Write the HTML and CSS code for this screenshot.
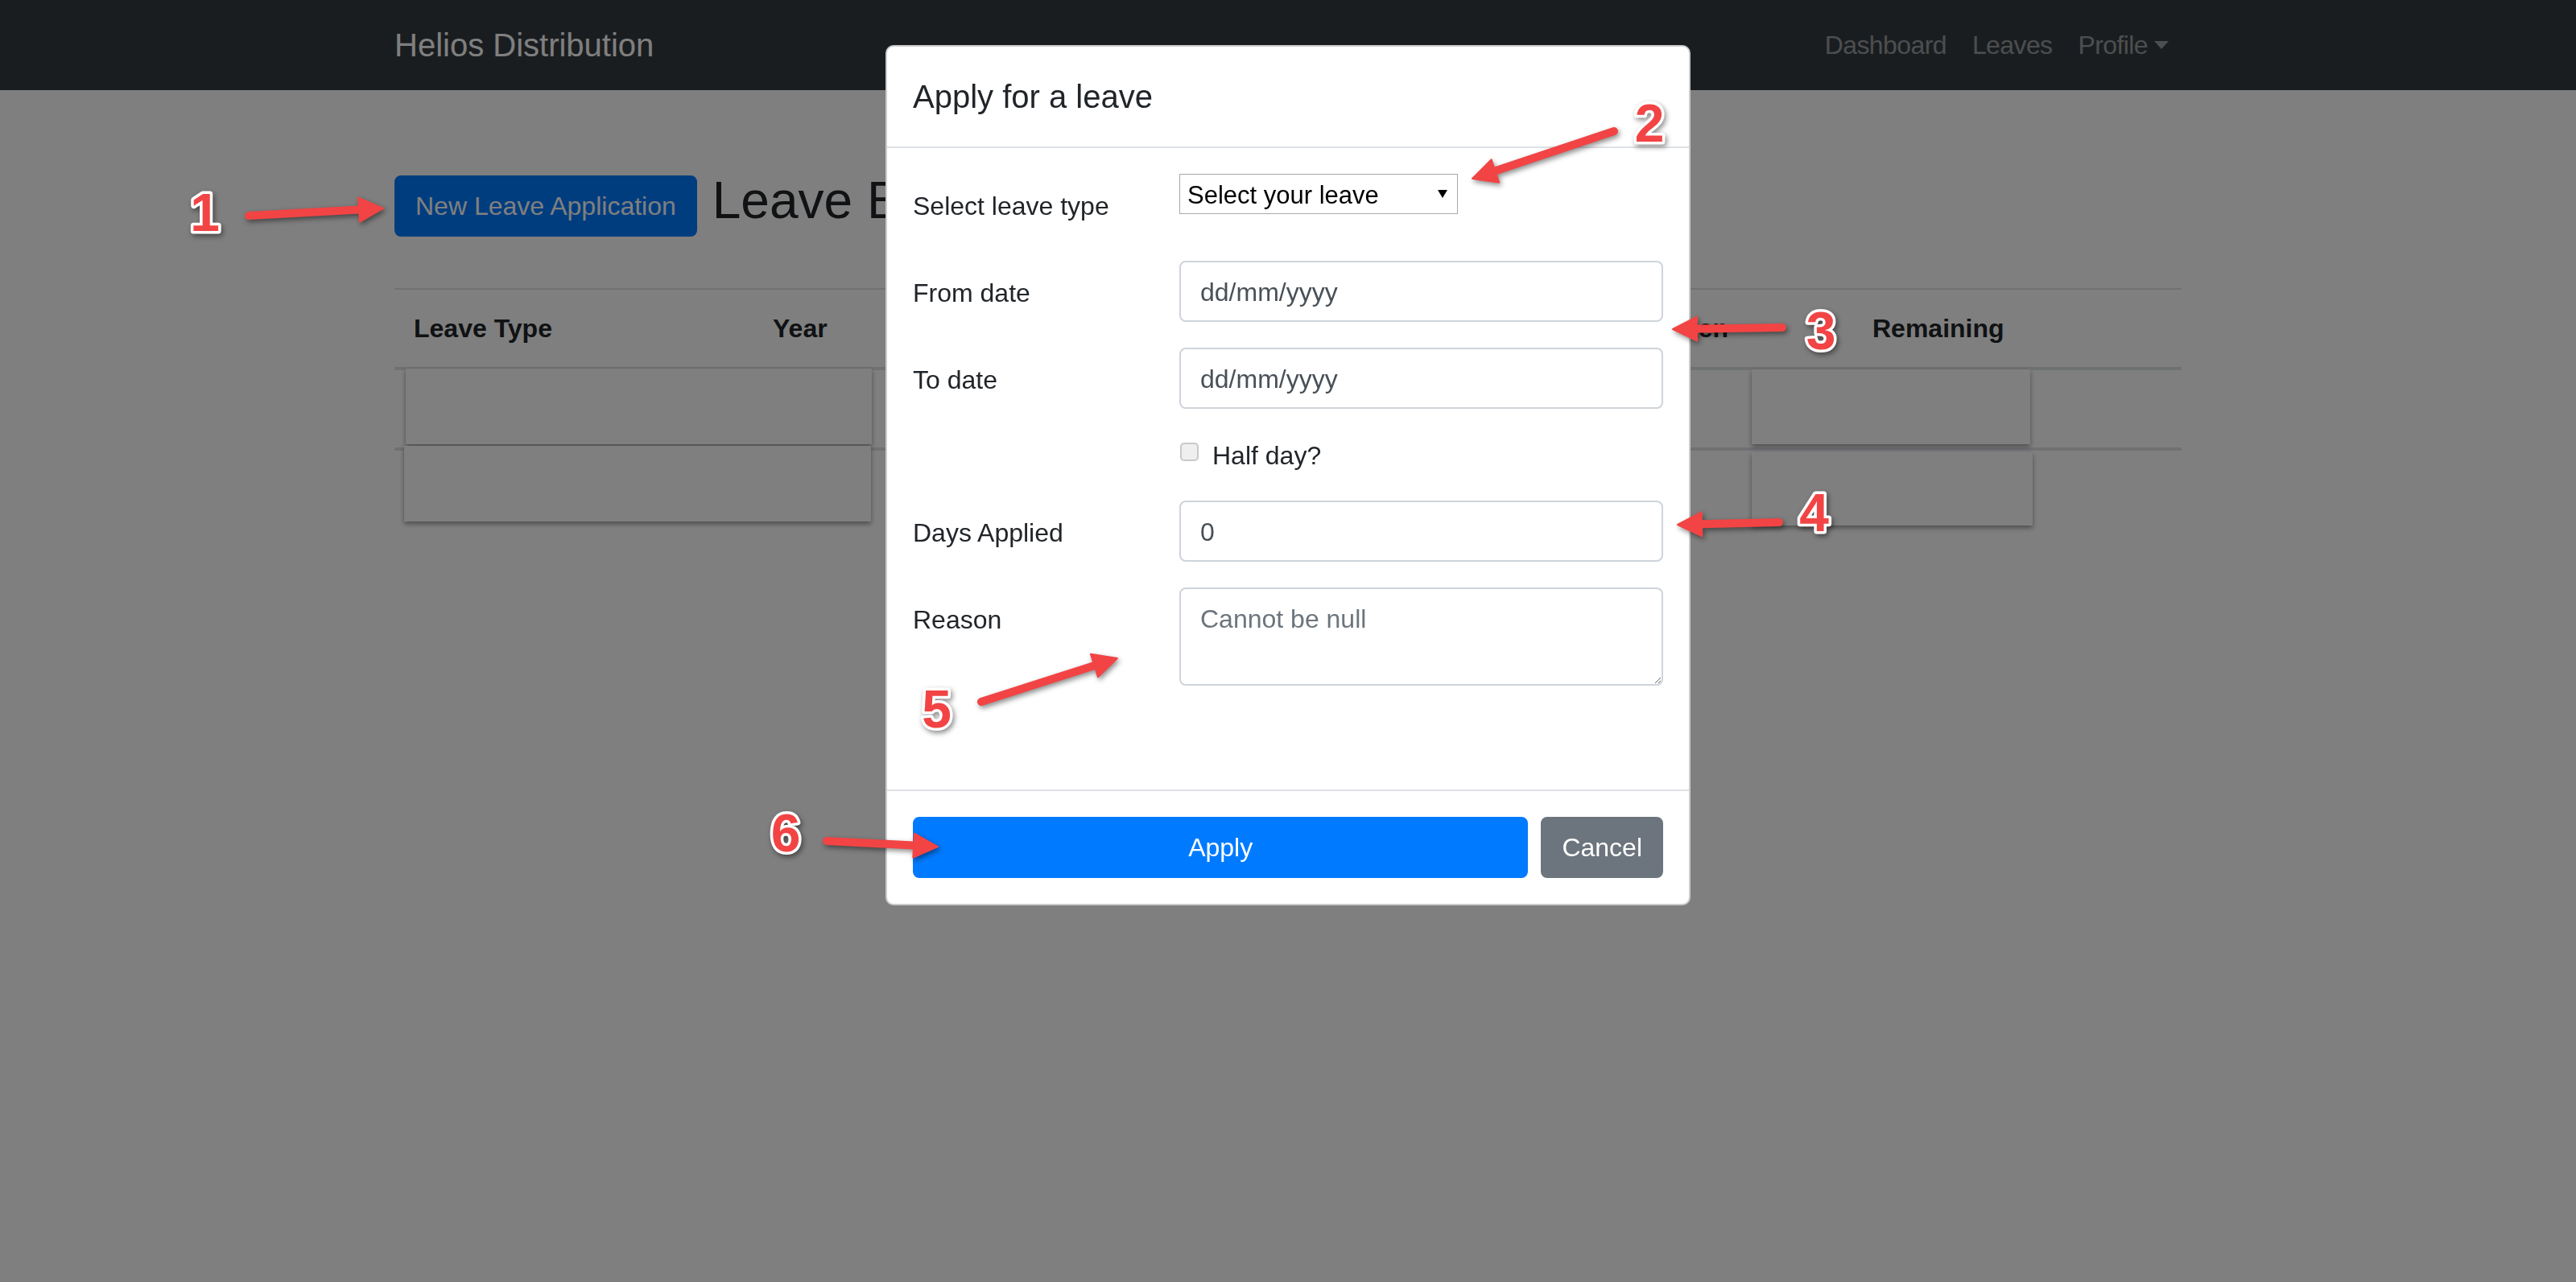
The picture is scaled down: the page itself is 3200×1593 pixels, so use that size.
FILE: index.html
```html
<!DOCTYPE html>
<html lang="en">
<head>
<meta charset="utf-8">
<title>Leaves - Helios Distribution</title>
<link rel="stylesheet" href="styles.css">
</head>
<body>
<nav class="navbar">
  <div class="nav-inner">
    <a class="brand" href="#">Helios Distribution</a>
    <ul class="nav-links">
      <li><a href="#">Dashboard</a></li>
      <li><a href="#">Leaves</a></li>
      <li><a href="#" class="dropdown-toggle">Profile</a></li>
    </ul>
  </div>
</nav>

<main class="page">
  <div class="title-row">
    <button class="btn btn-primary" type="button">New Leave Application</button>
    <h2 class="page-title">Leave Balance</h2>
  </div>

  <div class="table">
    <div class="thead">
      <div class="th c1">Leave Type</div>
      <div class="th c2">Year</div>
      <div class="th c3">Entitled</div>
      <div class="th c4">Carried Forward</div>
      <div class="th c5">Taken</div>
      <div class="th c6">Remaining</div>
    </div>
    <div class="tr tr-1">
      <div class="skel skel-a"></div>
      <div class="skel skel-b"></div>
    </div>
    <div class="tr tr-2">
      <div class="skel skel-c"></div>
      <div class="skel skel-d"></div>
    </div>
  </div>
</main>

<div class="backdrop"></div>

<div class="modal">
  <div class="modal-dialog">
    <div class="modal-content">
      <div class="modal-header">
        <h5 class="modal-title">Apply for a leave</h5>
      </div>
      <form class="modal-body">
        <div class="form-row">
          <label class="col-label">Select leave type</label>
          <div class="col-field">
            <span class="select-wrap">
              <select class="plain-select"><option>Select your leave</option></select>
            </span>
          </div>
        </div>
        <div class="form-row">
          <label class="col-label">From date</label>
          <div class="col-field"><input class="form-control ph-dark" type="text" placeholder="dd/mm/yyyy"></div>
        </div>
        <div class="form-row">
          <label class="col-label">To date</label>
          <div class="col-field"><input class="form-control ph-dark" type="text" placeholder="dd/mm/yyyy"></div>
        </div>
        <div class="form-row">
          <div class="col-field col-offset">
            <label class="form-check"><input class="check" type="checkbox"><span>Half day?</span></label>
          </div>
        </div>
        <div class="form-row">
          <label class="col-label">Days Applied</label>
          <div class="col-field"><input class="form-control" type="text" value="0"></div>
        </div>
        <div class="form-row">
          <label class="col-label">Reason</label>
          <div class="col-field"><textarea class="form-control textarea" rows="2" placeholder="Cannot be null"></textarea></div>
        </div>
      </form>
      <div class="modal-footer">
        <button class="btn btn-primary btn-apply" type="button">Apply</button>
        <button class="btn btn-secondary" type="button">Cancel</button>
      </div>
    </div>
  </div>
</div>

<svg class="annotations" width="3200" height="1593" viewBox="0 0 3200 1593" aria-hidden="true">
  <g class="arrows">
    <line x1="309" y1="268" x2="456" y2="260"/>
    <polygon points="476,259 446.9,275.6 445.2,245.6"/>
    <line x1="2005" y1="163" x2="1848" y2="215.6"/>
    <polygon points="1829,222 1852.7,198.2 1862.2,226.7"/>
    <line x1="2214" y1="407" x2="2098" y2="408.7"/>
    <polygon points="2078,409 2107.8,393.6 2108.2,423.6"/>
    <line x1="2210" y1="649" x2="2104" y2="651.5"/>
    <polygon points="2084,652 2113.6,636.3 2114.4,666.3"/>
    <line x1="1219" y1="872" x2="1369" y2="824.1"/>
    <polygon points="1388,818 1364,841.4 1354.9,812.8"/>
    <line x1="1027" y1="1045" x2="1145" y2="1051"/>
    <polygon points="1165,1052 1134.3,1065.5 1135.8,1035.5"/>
  </g>
  <g class="nums">
    <text x="254.5" y="287">1</text>
    <text x="2049" y="175.6">2</text>
    <text x="2262" y="434">3</text>
    <text x="2253.5" y="659.6">4</text>
    <text x="1163.5" y="903.6">5</text>
    <text x="976" y="1058">6</text>
  </g>
</svg>
</body>
</html>
```

FILE: styles.css
```css
* { box-sizing: border-box; }

html, body {
  margin: 0;
  width: 3200px;
  height: 1593px;
  overflow: hidden;
}

body {
  position: relative;
  background: #fff;
  color: #212529;
  font-family: "Liberation Sans", Arial, sans-serif;
  font-size: 32px;
  line-height: 1.5;
}

a { text-decoration: none; }

/* Navbar */
.navbar {
  background: #343a40;
  padding: 16px 0;
}
.nav-inner {
  width: 2220px;
  margin: 0 auto;
  display: flex;
  align-items: center;
  justify-content: space-between;
}
.brand {
  color: #fff;
  font-size: 40px;
  line-height: 60px;
  padding: 10px 0;
}
.nav-links {
  list-style: none;
  margin: 0;
  padding: 0;
  display: flex;
}
.nav-links a {
  display: block;
  padding: 16px;
  line-height: 48px;
  letter-spacing: -0.6px;
  color: rgba(255, 255, 255, .5);
}
.dropdown-toggle::after {
  content: "";
  display: inline-block;
  margin-left: 8px;
  vertical-align: 6px;
  border-top: 10px solid;
  border-left: 9.5px solid transparent;
  border-right: 9.5px solid transparent;
}

/* Page */
.page {
  width: 2220px;
  margin: 106px auto 0;
}
.title-row {
  display: flex;
  align-items: flex-start;
  margin-bottom: 64px;
}
.page-title {
  margin: -7px 0 0 19px;
  font-size: 64px;
  font-weight: 500;
  line-height: 1.2;
}

.btn {
  display: inline-block;
  font-family: inherit;
  font-size: 32px;
  line-height: 48px;
  padding: 12px 24px;
  border: 2px solid transparent;
  border-radius: 8px;
  color: #fff;
  cursor: pointer;
  text-align: center;
}
.btn-primary { background: #007bff; border-color: #007bff; }
.btn-secondary { background: #6c757d; border-color: #6c757d; }

/* Table */
.table { border-top: 2px solid #dee2e6; }
.thead {
  display: grid;
  grid-template-columns: 446px 364px 400px 333px 269px 408px;
  border-bottom: 4px solid #dee2e6;
}
.th {
  padding: 24px;
  font-weight: bold;
  line-height: 48px;
}
.tr {
  display: grid;
  height: 96px;
  border-top: 4px solid #dee2e6;
}
.tr-1 { grid-template-columns: 14px 579px 1093px 346px 1fr; border-top: 0; height: 96px; }
.tr-2 { grid-template-columns: 12px 580px 1094px 349px 1fr; }
.skel {
  background: #fff;
  box-shadow: 0 3px 6px rgba(0, 0, 0, .4);
  align-self: start;
}
.skel-a { grid-column: 2; margin-top: -2px; height: 94px; }
.skel-b { grid-column: 4; margin-top: -1px; height: 93px; }
.skel-c { grid-column: 2; margin-top: -6px; height: 94px; }
.skel-d { grid-column: 4; margin-top: 2px; height: 91px; }

/* Modal */
.backdrop {
  position: fixed;
  inset: 0;
  background: rgba(0, 0, 0, .5);
  z-index: 1040;
}
.modal {
  position: fixed;
  inset: 0;
  z-index: 1050;
}
.modal-dialog {
  width: 1000px;
  margin: 56px auto 0;
}
.modal-content {
  background: #fff;
  border: 2px solid rgba(0, 0, 0, .2);
  border-radius: 10px;
}
.modal-header {
  padding: 32px;
  border-bottom: 2px solid #dee2e6;
}
.modal-title {
  margin: 0;
  font-size: 40px;
  font-weight: 500;
  line-height: 60px;
}
.modal-body {
  display: block;
  margin: 0;
  padding: 32px 32px 129px;
}
.form-row {
  display: grid;
  grid-template-columns: 331px 601px;
  margin-bottom: 32px;
}
.form-row:last-child { margin-bottom: 0; }
.col-label {
  padding: 16px 0 12px;
  line-height: 48px;
}
.col-offset { grid-column: 2; }

.select-wrap {
  position: relative;
  display: inline-block;
}
.select-wrap::after {
  content: "";
  position: absolute;
  right: 13px;
  top: 20px;
  border-top: 10px solid #000;
  border-left: 6px solid transparent;
  border-right: 6px solid transparent;
  pointer-events: none;
}
.plain-select {
  -webkit-appearance: none;
  appearance: none;
  display: block;
  width: 346px;
  height: 50px;
  margin: 0;
  padding: 2px 30px 0 9px;
  border: 1px solid #a9a9a9;
  border-radius: 0;
  background: #fff;
  color: #000;
  font-family: inherit;
  font-size: 31px;
}

.form-control {
  display: block;
  width: 100%;
  height: 76px;
  margin: 0;
  padding: 13px 24px 11px;
  font-family: inherit;
  font-size: 32px;
  line-height: 48px;
  color: #495057;
  background: #fff;
  border: 2px solid #ced4da;
  border-radius: 8px;
}
.form-control::placeholder { color: #6c757d; opacity: 1; }
.ph-dark::placeholder { color: #495057; }
.textarea {
  height: 122px;
  resize: vertical;
}

.form-check {
  display: flex;
  align-items: flex-start;
  line-height: 48px;
  padding-top: 2px;
}
.check {
  -webkit-appearance: none;
  appearance: none;
  width: 23px;
  height: 23px;
  margin: 8px 17px 0 1px;
  border: 2px solid #c9c9c9;
  border-radius: 5px;
  background: #efefef;
}

.modal-footer {
  display: flex;
  gap: 16px;
  padding: 32px;
  border-top: 2px solid #dee2e6;
}
.btn-apply { flex: 1; }

/* Annotation overlay */
.annotations {
  position: absolute;
  top: 0;
  left: 0;
  z-index: 2000;
  pointer-events: none;
}
.arrows {
  filter: drop-shadow(2px 3px 3px rgba(0, 0, 0, .45));
}
.arrows line {
  stroke: #f24444;
  stroke-width: 10;
  stroke-linecap: round;
}
.arrows polygon {
  fill: #f24444;
  stroke: #f24444;
  stroke-width: 2;
  stroke-linejoin: round;
}
.nums {
  filter: drop-shadow(2px 3px 3px rgba(0, 0, 0, .45));
}
.nums text {
  font-family: "Liberation Sans", Arial, sans-serif;
  font-weight: bold;
  font-size: 66px;
  text-anchor: middle;
  fill: #f24444;
  stroke: #fff;
  stroke-width: 7px;
  stroke-linejoin: round;
  paint-order: stroke;
}
```
